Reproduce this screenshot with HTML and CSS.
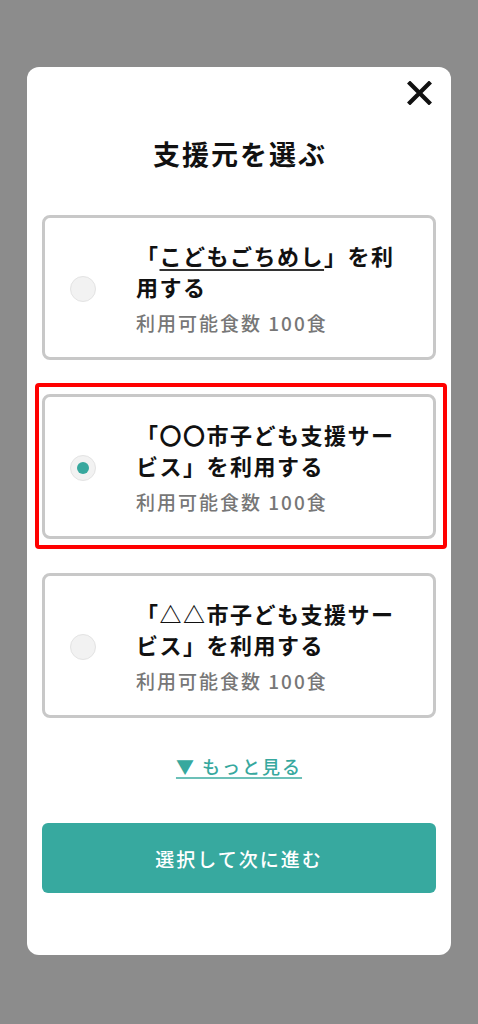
FILE: index.html
```html
<!DOCTYPE html>
<html lang="ja">
<head>
<meta charset="utf-8">
<title>支援元を選ぶ</title>
<link rel="stylesheet" href="styles.css">
</head>
<body>
<div class="modal">
  <div class="close-row">
    <button class="close" aria-label="閉じる">
      <svg width="25" height="24" viewBox="0 0 25 24"><path d="M3 2.5 L22 21.5 M22 2.5 L3 21.5" stroke="#111" stroke-width="4.2" stroke-linecap="square"/></svg>
    </button>
  </div>
  <h1 class="title">支援元を選ぶ</h1>
  <div class="options">
    <label class="option">
      <span class="radio"></span>
      <span class="text">
        <span class="name"><span class="line">「<span class="ul">こどもごちめし</span>」を利</span><span class="line">用する</span></span>
        <span class="meta">利用可能食数 100食</span>
      </span>
    </label>
    <label class="option selected">
      <span class="radio"><span class="dot"></span></span>
      <span class="text">
        <span class="name"><span class="line">「〇〇市子ども支援サー</span><span class="line">ビス」を利用する</span></span>
        <span class="meta">利用可能食数 100食</span>
      </span>
    </label>
    <label class="option">
      <span class="radio"></span>
      <span class="text">
        <span class="name"><span class="line">「△△市子ども支援サー</span><span class="line">ビス」を利用する</span></span>
        <span class="meta">利用可能食数 100食</span>
      </span>
    </label>
  </div>
  <a class="more" href="#">▼ もっと見る</a>
  <button class="submit">選択して次に進む</button>
</div>
</body>
</html>
```

FILE: styles.css
```css
* { box-sizing: border-box; }
html, body {
  margin: 0;
  padding: 0;
}
body {
  background: #8c8c8c;
  height: 1024px;
  overflow: hidden;
  font-family: "Noto Sans CJK JP", "Noto Sans", sans-serif;
  color: #111;
}
.modal {
  margin: 67px 27px 0;
  width: 424px;
  height: 888px;
  background: #fff;
  border-radius: 12px;
  padding: 0 15px;
  display: flex;
  flex-direction: column;
}
.close-row {
  display: flex;
  justify-content: flex-end;
  padding-top: 14px;
  padding-right: 4px;
}
.close {
  width: 25px;
  height: 24px;
  padding: 0;
  border: 0;
  background: none;
  display: block;
}
.close svg { display: block; }
.title {
  margin: 29px 0 0;
  text-align: center;
  font-size: 27px;
  line-height: 40px;
  font-weight: 700;
  letter-spacing: 2px;
  padding-left: 2px;
}
.options {
  margin-top: 41px;
  display: flex;
  flex-direction: column;
  gap: 34px;
}
.option {
  position: relative;
  display: flex;
  align-items: center;
  border: 3px solid #c8c8c8;
  border-radius: 8px;
  padding: 22px 22px 20px 25px;
}
.option.selected::after {
  content: "";
  position: absolute;
  left: -10px;
  right: -14px;
  top: -14px;
  bottom: -13px;
  border: 4px solid #ff0000;
  border-radius: 4px;
  pointer-events: none;
}
.radio {
  flex: 0 0 26px;
  width: 26px;
  height: 26px;
  border-radius: 50%;
  background: #f2f2f2;
  border: 1px solid #e3e3e3;
  display: flex;
  align-items: center;
  justify-content: center;
}
.dot {
  width: 12px;
  height: 12px;
  border-radius: 50%;
  background: #37a89e;
}
.text {
  margin-left: 40px;
  display: flex;
  flex-direction: column;
  min-width: 0;
}
.name {
  display: flex;
  flex-direction: column;
  font-size: 22px;
  line-height: 31px;
  font-weight: 700;
  letter-spacing: 1.5px;
}
.line {
  display: block;
  white-space: nowrap;
}
.ul {
  text-decoration: underline;
  text-decoration-color: #333;
  text-decoration-thickness: 1.5px;
  text-underline-offset: 4px;
}
.meta {
  margin-top: 7px;
  font-size: 19px;
  line-height: 28px;
  font-weight: 500;
  color: #777;
  letter-spacing: 2px;
}
.more {
  margin-top: 35px;
  align-self: center;
  font-size: 18px;
  line-height: 26px;
  font-weight: 500;
  letter-spacing: 2px;
  color: #37a89e;
  text-decoration: underline;
  text-decoration-color: #6cc0b8;
  text-decoration-thickness: 2px;
  text-underline-offset: 3px;
}
.submit {
  margin-top: 44px;
  height: 70px;
  width: 100%;
  border: 0;
  border-radius: 6px;
  background: #37a99f;
  color: #fff;
  font-family: inherit;
  font-size: 19px;
  font-weight: 500;
  letter-spacing: 2px;
}
```
